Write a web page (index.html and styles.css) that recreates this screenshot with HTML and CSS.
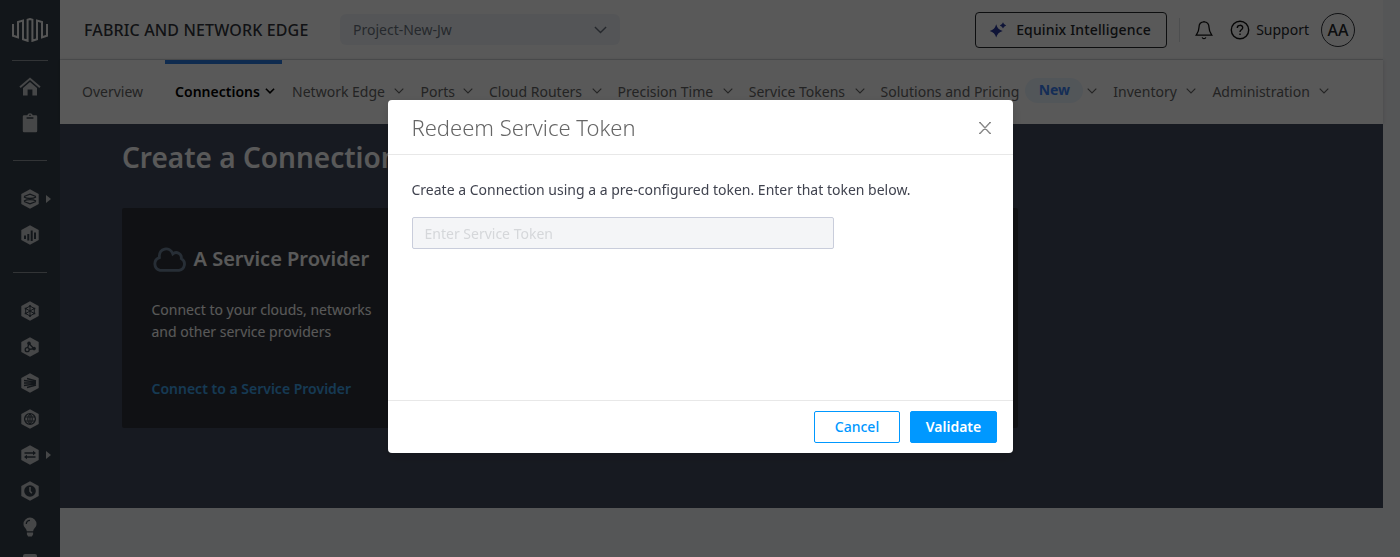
FILE: index.html
```
<!DOCTYPE html>
<html lang="en">
<head>
	<title>Fabric and Network Edge</title>
	<meta charset="UTF-8">
	<link rel="stylesheet" href="styles.css">
</head>
<body>
	<!-- shared icon shapes -->
	<svg class="defs">
		<symbol id="hex" viewBox="0 0 18 20"><path d="M9 0.3 17.7 5.1V14.9L9 19.7 0.3 14.9V5.1Z"/></symbol>
		<symbol id="chevron" viewBox="0 0 10 6"><path d="M0.7 0.7 5 5 9.3 0.7" fill="none" stroke="currentColor" stroke-width="1.1"/></symbol>
		<symbol id="chevron-bold" viewBox="0 0 10 6"><path d="M0.9 0.8 5 4.8 9.1 0.8" fill="none" stroke="currentColor" stroke-width="1.6"/></symbol>
	</svg>
	<div class="page">
		<div class="sidebar">
			<svg class="logo" viewBox="0 0 36 24"><path d="M1 6V17.8L6 19.3V4L11 2.6V21.2L15.6 22.8V1.8L18 1 20.4 1.8V22.8L25 21.2V2.6L30 4V19.3L35 17.8V6"/></svg>
			<span class="line long"></span>
			<ul class="side-menu first">
				<li><svg width="22" height="20" viewBox="0 0 22 20"><path d="M0.4 9.4 11 .4 21.6 9.4 20.3 10.9 11 3.1 1.7 10.9Z"/><path d="M4 11 11 5 18 11V18.6H13.4V12.4H8.6V18.6H4Z"/></svg></li>
				<li><svg width="16" height="20" viewBox="0 0 16 20"><path d="M2 2.3H5.2A2.9 2.9 0 0 1 10.8 2.3H14A1.2 1.2 0 0 1 15.2 3.5V18A1.2 1.2 0 0 1 14 19.2H2A1.2 1.2 0 0 1 .8 18V3.5A1.2 1.2 0 0 1 2 2.3Z"/><path class="cut" d="M4.6 5H11.4M7.3 2.3H8.7"/></svg></li>
			</ul>
			<span class="line"></span>
			<ul class="side-menu">
				<li><svg width="18" height="20"><use href="#hex"/><path class="cut" d="M3 7.5 9 5.2 15 7.5M3 8C6 10 12 10 15 8M3 12C6 10.2 12 10.2 15 12M3 12.5 9 14.8 15 12.5"/></svg><i class="arrow"></i></li>
				<li><svg width="18" height="20"><use href="#hex"/><path class="cut bars" d="M4 10.5V14M7.3 9V15.5M10.7 5.5V16M14 7.5V14"/></svg></li>
			</ul>
			<span class="line"></span>
			<ul class="side-menu last">
				<li><svg width="18" height="20"><use href="#hex"/><path class="cut thin" d="M9 5 13.3 7.5V12.5L9 15 4.7 12.5V7.5ZM9 5V15M4.7 7.5 13.3 12.5M13.3 7.5 4.7 12.5"/><path class="cut dots" d="M9 4.2V5.8M13.3 6.7V8.3M13.3 11.7V13.3M9 14.2V15.8M4.7 11.7V13.3M4.7 6.7V8.3"/></svg></li>
				<li><svg width="18" height="20"><use href="#hex"/><path class="cut" d="M8 6.5 6 12.7 13 11.7 8 6.5"/><circle class="hole" cx="8" cy="6.4" r="1.8"/><circle class="hole" cx="13.1" cy="11.6" r="1.8"/><circle class="ring" cx="6.2" cy="12.7" r="2"/></svg></li>
				<li><svg width="18" height="20"><use href="#hex"/><path class="cut" d="M6 5.5 15 8M3 7.5 15 9.2M3 10H15M3 12.5 15 10.8M6 14.5 15 12"/></svg></li>
				<li><svg width="18" height="20"><use href="#hex"/><circle class="cut" cx="9" cy="10" r="5.4"/><path class="cut thin" d="M4 8H14M4 12H14M9 5V15M9 5C6 7.5 6 12.5 9 15M9 5C12 7.5 12 12.5 9 15"/></svg></li>
				<li><svg width="18" height="20"><use href="#hex"/><path class="cut heavy" d="M3.5 8H13M14.5 12H5"/><path class="hole" d="M12 5.8 15 8 12 10.2ZM6 9.8 3 12 6 14.2Z"/></svg><i class="arrow"></i></li>
				<li><svg width="18" height="20"><use href="#hex"/><circle class="hole" cx="9" cy="10" r="5.8"/><path class="hand" d="M9 6V10.2L10.8 12.3"/></svg></li>
				<li><svg width="14" height="20" viewBox="0 0 14 20"><path d="M7 .5A6.5 6.5 0 0 1 13.5 7C13.5 10.6 10.5 11.2 10.2 14.3H3.8C3.5 11.2.5 10.6.5 7A6.5 6.5 0 0 1 7 .5ZM3.9 15.6H10.1V17.6L8.8 19.5H5.2L3.9 17.6Z"/><path class="cut" d="M3.3 7A3.8 3.8 0 0 1 7 3.3"/></svg></li>
				<li><svg width="14" height="20" viewBox="0 0 14 20"><rect y="1" width="14" height="18" rx="2"/></svg></li>
			</ul>
		</div>
		<div class="main">
			<div class="topbar">
				<span class="product">FABRIC AND NETWORK EDGE</span>
				<div class="project"><span>Project-New-Jw</span><svg width="13" height="8"><use href="#chevron"/></svg></div>
				<div class="tools">
					<div class="ai"><svg width="18" height="16" viewBox="0 0 18 16"><path d="M7.2 2.2Q8.6 7.6 13.7 9 8.6 10.4 7.2 15.6 5.8 10.4.7 9 5.8 7.6 7.2 2.2ZM14 .2Q14.7 2.7 17.2 3.4 14.7 4.1 14 6.6 13.3 4.1 10.8 3.4 13.3 2.7 14 .2Z"/></svg><span>Equinix Intelligence</span></div>
					<div class="bell"><svg width="18" height="20" viewBox="0 0 18 20"><path d="M9 1.9V.9M9 1.9C5.7 1.9 4 4.3 4 7.3 4 11.2 3 12.6 1.2 15.2H16.8C15 12.6 14 11.2 14 7.3 14 4.3 12.3 1.9 9 1.9ZM7.2 17.4A1.9 1.9 0 0 0 10.8 17.4"/></svg></div>
					<svg class="help" width="20" height="20" viewBox="0 0 20 20"><circle cx="10" cy="10" r="8.7"/><path d="M7.3 7.9C7.3 4.5 12.7 4.5 12.7 7.7 12.7 9.8 10 9.7 10 12M10 13.5V15"/></svg>
					<span class="support">Support</span>
					<span class="avatar">AA</span>
				</div>
			</div>
			<ul class="nav">
				<li class="overview">Overview</li>
				<li class="active">Connections<svg><use href="#chevron-bold"/></svg></li>
				<li>Network Edge<svg><use href="#chevron"/></svg></li>
				<li class="ports">Ports<svg><use href="#chevron"/></svg></li>
				<li>Cloud Routers<svg><use href="#chevron"/></svg></li>
				<li>Precision Time<svg><use href="#chevron"/></svg></li>
				<li>Service Tokens<svg><use href="#chevron"/></svg></li>
				<li>Solutions and Pricing<span class="new">New</span><svg><use href="#chevron"/></svg></li>
				<li>Inventory<svg><use href="#chevron"/></svg></li>
				<li>Administration<svg><use href="#chevron"/></svg></li>
			</ul>
			<div class="hero">
				<h1>Create a Connection</h1>
				<div class="card">
					<h2><svg width="35" height="25" viewBox="0 0 35 25"><path d="M8 23.3H27A6.3 6.3 0 0 0 29.3 11.6C30 6.6 24.4 3.8 20.8 6.8 18-.8 6.4.4 7.4 10.6A6.6 6.6 0 0 0 8 23.3Z"/></svg>A Service Provider</h2>
					<p>Connect to your clouds, networks<br>and other service providers</p>
					<a>Connect to a Service Provider</a>
				</div>
			</div>
		</div>
	</div>
	<div class="mask">
		<div class="modal">
			<div class="modal-head">
				<h3>Redeem Service Token</h3>
				<svg width="12" height="12" viewBox="0 0 12 12"><path d="M0 .5H2M10 .5H12M0 11.5H2M10 11.5H12M1 .5 11 11.5M11 .5 1 11.5"/></svg>
			</div>
			<div class="modal-body">
				<p>Create a Connection using a a pre-configured token. Enter that token below.</p>
				<input type="text" placeholder="Enter Service Token">
			</div>
			<div class="modal-foot">
				<button class="cancel">Cancel</button>
				<button class="validate">Validate</button>
			</div>
		</div>
	</div>
</body>
</html>
```

FILE: styles.css
```
*{
	margin: 0;
	padding: 0;
	box-sizing: border-box;
}
ul{
	list-style: none;
}
body{
	font-family: "Noto Sans", "Open Sans", sans-serif;
	font-size: 14px;
	height: 557px;
	overflow: hidden;
	background: #f3f5f8;
}
svg{
	display: block;
	flex: none;
}
.defs{
	display: none;
}
.page{
	display: flex;
	height: 557px;
}
/* sidebar */
.sidebar{
	width: 60px;
	height: 557px;
	overflow: hidden;
	background: #35404b;
	display: flex;
	flex-direction: column;
	align-items: center;
	padding-top: 18px;
}
.sidebar .logo{
	width: 36px;
	height: 24px;
	margin-bottom: 18px;
	fill: none;
	stroke: #f4f4f4;
	stroke-width: 2;
}
.line{
	flex: none;
	width: 34px;
	height: 1px;
	background: #90969c;
}
.line.long{
	width: 36px;
}
.side-menu{
	width: 60px;
	flex: none;
	padding: 20px 0 19px;
	fill: #c8cacd;
}
.side-menu.first{
	padding: 8px 0 19px;
}
.side-menu li{
	height: 36px;
	display: flex;
	align-items: center;
	justify-content: center;
	position: relative;
}
.arrow{
	position: absolute;
	left: 46px;
	top: 14px;
	border: 4px solid transparent;
	border-left: 5px solid #c8cacd;
	border-right: 0;
}
.cut, .ring{
	fill: none;
	stroke: #35404b;
	stroke-width: 1.3;
}
.ring{
	fill: #c8cacd;
}
.bars{
	stroke-width: 2;
}
.thin{
	stroke-width: 1;
}
.dots{
	stroke-width: 2;
}
.heavy{
	stroke-width: 1.6;
}
.hole{
	fill: #35404b;
}
.hand{
	fill: none;
	stroke: #c8cacd;
	stroke-width: 1.5;
}
/* header */
.main{
	width: 1323px;
}
.topbar{
	height: 60px;
	background: #fff;
	border-bottom: 1px solid #dcdee2;
	display: flex;
	align-items: center;
	padding: 0 28px 0 24px;
}
.product{
	width: 256px;
	font-size: 16px;
	font-weight: 500;
	letter-spacing: .14px;
	color: #33363c;
	white-space: nowrap;
}
.project{
	width: 280px;
	height: 31px;
	border-radius: 6px;
	background: #f1f4f9;
	color: #6c7480;
	display: flex;
	align-items: center;
	justify-content: space-between;
	padding: 0 13px;
}
.tools{
	margin-left: auto;
	display: flex;
	align-items: center;
	color: #26282c;
}
.ai{
	width: 192px;
	height: 36px;
	border: 1px solid #26282c;
	border-radius: 4px;
	display: flex;
	align-items: center;
	font-weight: 500;
	letter-spacing: .15px;
	padding-left: 13px;
	gap: 9px;
}
.ai svg{
	fill: #2b3a9e;
}
.bell, .help{
	fill: none;
	stroke: #111;
	stroke-width: 1.3;
}
.bell{
	width: 42px;
	height: 24px;
	margin-left: 12px;
	padding: 2px 0 0 15px;
	border-left: 1px solid #dcdee2;
}
.help{
	margin-left: 9px;
	stroke-width: 1.4;
}
.support{
	margin: 0 12px 0 6px;
}
.avatar{
	width: 34px;
	height: 34px;
	border: 1px solid #33363c;
	border-radius: 50%;
	font-size: 16px;
	font-weight: 500;
	line-height: 32px;
	text-align: center;
}
.nav{
	height: 64px;
	background: #fff;
	display: flex;
	padding-left: 22px;
	color: #666;
	box-shadow: 0 0 4px rgba(0,0,0,.15);
}
.nav li{
	height: 64px;
	display: flex;
	align-items: center;
	margin-right: 16px;
	padding-bottom: 2px;
	white-space: nowrap;
}
.nav svg{
	width: 10px;
	height: 6px;
	margin-left: 9.5px;
}
.nav .overview{
	margin-right: 22px;
}
.nav .active{
	width: 117px;
	margin-right: 10px;
	padding: 0 0 6px 10px;
	border-top: 4px solid #2b7de1;
	color: #000;
	font-weight: 600;
}
.nav .active svg{
	margin-left: 5px;
}
.nav .ports svg{
	margin-left: 8px;
}
.new{
	width: 58px;
	height: 25px;
	margin: 0 0 1px 6px;
	border-radius: 13px;
	background: #ebf5ff;
	color: #3b82f6;
	font-weight: 700;
	line-height: 24px;
	text-align: center;
}
.nav .new + svg{
	margin-left: 4px;
}
/* content */
.hero{
	height: 384px;
	background: #444c5f;
	padding: 13px 0 0 62px;
}
.hero h1{
	font-size: 28px;
	font-weight: 600;
	line-height: 40px;
	color: #fff;
}
.card{
	width: 896px;
	height: 220px;
	margin-top: 31px;
	border-radius: 2px;
	background: #30333a;
	color: #fff;
	padding: 34px 29.5px;
}
.card h2{
	display: flex;
	align-items: center;
	gap: 7px;
	font-size: 20px;
	font-weight: 600;
	line-height: 34px;
}
.card h2 svg{
	fill: none;
	stroke: #70859a;
	stroke-width: 2.8;
}
.card p{
	margin-top: 23px;
	line-height: 22px;
}
.card a{
	display: block;
	margin-top: 35px;
	line-height: 22px;
	color: #3fa5ed;
	font-weight: 600;
}
/* dialog */
.mask{
	position: fixed;
	left: 0;
	top: 0;
	width: 100%;
	height: 100%;
	background: rgba(0,0,0,.65);
}
.modal{
	width: 625px;
	height: 353px;
	margin: 100px 0 0 388px;
	background: #fff;
	border-radius: 4px;
	box-shadow: 0 4px 12px rgba(0,0,0,.15);
	display: flex;
	flex-direction: column;
}
.modal-head{
	height: 55px;
	border-bottom: 1px solid #e8e8e8;
	display: flex;
	align-items: center;
	justify-content: space-between;
	padding: 0 22px 0 23.5px;
}
.modal-head h3{
	font-size: 22px;
	font-weight: 300;
	color: #666;
}
.modal-head svg{
	margin-top: 2px;
	fill: none;
	stroke: #888;
	stroke-width: 1.3;
}
.modal-body{
	flex: 1;
	padding: 24px;
	color: #40434f;
}
.modal-body p{
	margin-left: -.5px;
	line-height: 22px;
}
.modal-body input{
	display: block;
	width: 422px;
	height: 32px;
	margin-top: 16px;
	padding: 0 11.5px;
	border: 1px solid #c9cddb;
	border-radius: 2px;
	background: #f4f5f7;
	font: inherit;
}
.modal-body input::placeholder{
	color: #d5d7da;
}
.modal-foot{
	height: 53px;
	border-top: 1px solid #e8e8e8;
	display: flex;
	justify-content: flex-end;
	gap: 10px;
	padding: 10px 16px 0 0;
}
.modal-foot button{
	width: 87px;
	height: 32px;
	padding-bottom: 2px;
	border: 1px solid #0098ff;
	border-radius: 2px;
	font: inherit;
	font-weight: 500;
}
.modal-foot .cancel{
	width: 86px;
	background: #fff;
	color: #0098ff;
}
.modal-foot .validate{
	background: #0098ff;
	color: #fff;
	font-weight: 600;
}
```
